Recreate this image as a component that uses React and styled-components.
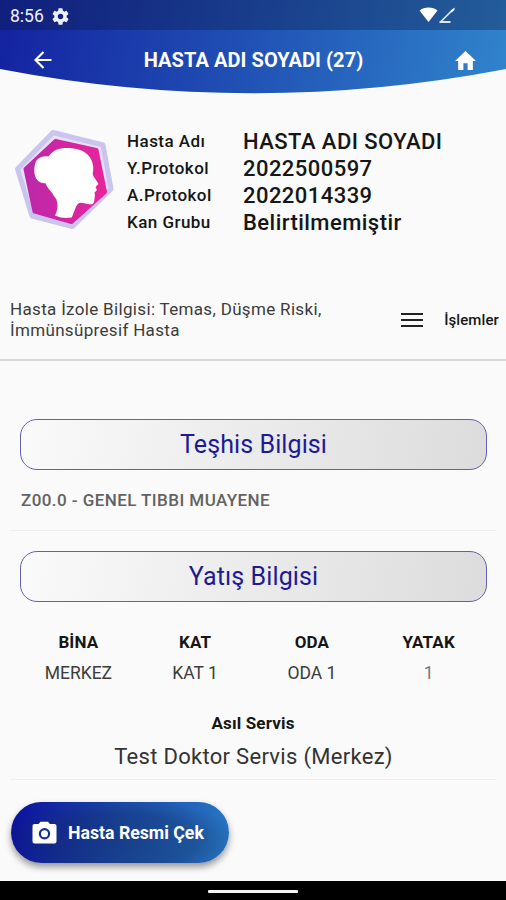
import React from 'react'
import styled, { createGlobalStyle } from 'styled-components'

const patient = [
    { label: 'Hasta Adı', value: 'HASTA ADI SOYADI' },
    { label: 'Y.Protokol', value: '2022500597' },
    { label: 'A.Protokol', value: '2022014339' },
    { label: 'Kan Grubu', value: 'Belirtilmemiştir' },
]

const location = [
    { label: 'BİNA', value: 'MERKEZ' },
    { label: 'KAT', value: 'KAT 1' },
    { label: 'ODA', value: 'ODA 1' },
    { label: 'YATAK', value: '1', light: true },
]

function GearIcon() {
    return (
        <svg width="17" height="17" viewBox="2 2 20 20" fill="currentColor">
            <path d="M19.14 12.94c.04-.3.06-.61.06-.94 0-.32-.02-.64-.07-.94l2.03-1.58a.49.49 0 0 0 .12-.61l-1.92-3.32a.488.488 0 0 0-.59-.22l-2.39.96c-.5-.38-1.03-.7-1.62-.94l-.36-2.54a.484.484 0 0 0-.48-.41h-3.84c-.24 0-.43.17-.47.41l-.36 2.54c-.59.24-1.13.57-1.62.94l-2.39-.96c-.22-.08-.47 0-.59.22L2.74 8.87c-.12.21-.08.47.12.61l2.03 1.58c-.05.3-.09.63-.09.94s.02.64.07.94l-2.03 1.58a.49.49 0 0 0-.12.61l1.92 3.32c.12.22.37.29.59.22l2.39-.96c.5.38 1.03.7 1.62.94l.36 2.54c.05.24.24.41.48.41h3.84c.24 0 .44-.17.47-.41l.36-2.54c.59-.24 1.13-.56 1.62-.94l2.39.96c.22.08.47 0 .59-.22l1.92-3.32c.12-.22.07-.47-.12-.61l-2.01-1.58zM12 15.2A3.200 3.200 0 1 1 12 8.800a3.200 3.200 0 0 1 0 6.400z"/>
        </svg>
    )
}

function SignalIcons() {
    return (
        <svg width="37" height="18" viewBox="0 0 37 18" fill="none">
            <path d="M.5 4.500C5 .4 14 .4 18.500 4.500L9.500 16Z" fill="#fff"/>
            <path d="M22 15.500L34 3.500" stroke="#dce7f3" strokeWidth="1.700"/>
            <path d="M31.500 5L35.500 1.500V4L32.500 6.500Z" fill="#fff"/>
            <path d="M20.500 16H31.500" stroke="#dce7f3" strokeWidth="2"/>
        </svg>
    )
}

function BackIcon() {
    return (
        <svg width="18" height="18" viewBox="0 0 18 18" fill="none" stroke="#fff" strokeWidth="2.200">
            <path d="M17.500 9H2M9.500 1L1.500 9L9.500 17"/>
        </svg>
    )
}

function HomeIcon() {
    return (
        <svg width="21" height="19" viewBox="0 0 20 17" fill="#fff" preserveAspectRatio="none">
            <path d="M8 17v-6h4v6h5V9h3L10 0 0 9h3v8z"/>
        </svg>
    )
}

function CameraIcon() {
    return (
        <svg width="25" height="23" viewBox="0 0 25 23">
            <path d="M2.500 3H6.500L8.500.7H16L18 3H22.500A2 2 0 0 1 24.500 5V20.500A2 2 0 0 1 22.500 22.500H2.500A2 2 0 0 1 .5 20.500V5A2 2 0 0 1 2.500 3Z" fill="#fff"/>
            <circle cx="12.500" cy="12.700" r="4.600" fill="none" stroke="#16308f" strokeWidth="2.200"/>
        </svg>
    )
}

function Avatar() {
    return (
        <svg width="102" height="102" viewBox="13 129 102 102">
            <defs>
                <linearGradient id="pink" x1="0" y1="0" x2="1" y2="0">
                    <stop offset="0" stopColor="#bb28aa"/>
                    <stop offset="1" stopColor="#e8249a"/>
                </linearGradient>
            </defs>
            <path d="M53 132.500L103 145L111 189L72.500 226.500L32 216L17.500 169Z" fill="#e7e1f8" stroke="#cac4ee" strokeWidth="5" strokeLinejoin="round"/>
            <path d="M55.500 141L96.500 150L105 192L71.500 222L34.500 211.500L25.500 169Z" fill="url(#pink)" stroke="url(#pink)" strokeWidth="4" strokeLinejoin="round"/>
            <path d="M48.500 156.500C53 150 59 148 67 148C76 148 84 150.500 88 155C92 159 94.500 166 92.700 173.500C93 177 96.500 180 98.500 184L95.500 187L97 190L94.500 192.500L95 195.500C94 198 95.500 203.500 91.500 204.300C88 205 80.500 201.500 78.300 203.500C75.500 206 74 213 71.700 217.500C66 218.500 60 218 55 215.500C57.500 211 58 206 57 201.500C56.500 198 54 197 52.500 193.500C50 190 46.500 187 45.700 183.300C42 183.500 37 181.500 35.500 177C33.500 172 34 165 36.500 160.500C39.500 156.500 44 156 48.500 156.500Z" fill="#fff"/>
        </svg>
    )
}

export default function App() {
    return (
        <Screen>
            <GlobalStyle/>
            <Header>
                <StatusBar>
                    <Clock>8:56</Clock>
                    <GearIcon/>
                    <Signal><SignalIcons/></Signal>
                </StatusBar>
                <TitleBar>
                    <BackIcon/>
                    <Title>HASTA ADI SOYADI (27)</Title>
                    <HomeIcon/>
                </TitleBar>
            </Header>
            <Patient>
                <Avatar/>
                <PatientGrid>
                    {patient.map(({ label, value }) => (
                        <React.Fragment key={label}>
                            <PatientLabel>{label}</PatientLabel>
                            <PatientValue>{value}</PatientValue>
                        </React.Fragment>
                    ))}
                </PatientGrid>
            </Patient>
            <InfoRow>
                <Isolation>Hasta İzole Bilgisi: Temas, Düşme Riski,<br/>İmmünsüpresif Hasta</Isolation>
                <MenuButton>
                    <Burger><i/><i/><i/></Burger>
                    İşlemler
                </MenuButton>
            </InfoRow>
            <Content>
                <Section>Teşhis Bilgisi</Section>
                <Diagnosis>Z00.0 - GENEL TIBBI MUAYENE</Diagnosis>
                <Section>Yatış Bilgisi</Section>
                <LocationGrid>
                    {location.map(({ label, value, light }) => (
                        <Cell key={label}>
                            <CellLabel>{label}</CellLabel>
                            <CellValue $light={light}>{value}</CellValue>
                        </Cell>
                    ))}
                </LocationGrid>
                <Service>
                    <ServiceLabel>Asıl Servis</ServiceLabel>
                    <ServiceName>Test Doktor Servis (Merkez)</ServiceName>
                </Service>
            </Content>
            <PhotoButton>
                <CameraIcon/>
                <span>Hasta Resmi Çek</span>
            </PhotoButton>
            <NavBar><Handle/></NavBar>
        </Screen>
    )
}

const GlobalStyle = createGlobalStyle`
    * {
        box-sizing: border-box;
    }

    body {
        margin: 0;
        background-color: #fafafa;
        font-family: Roboto, sans-serif;
    }

    svg {
        display: block;
        flex-shrink: 0;
    }
`

const Screen = styled.div`
    display: flex;
    flex-direction: column;
    width: 506px;
    height: 900px;
    overflow: hidden;
    background-color: #fafafa;
    color: #161616;
    white-space: nowrap;
`

const Header = styled.header`
    flex-shrink: 0;
    height: 94px;
    background: linear-gradient(100deg, #1422a0 0%, #2050b4 48%, #3084cc 100%);
    clip-path: path('M0 0H506V69Q253 117.500 0 69Z');
`

const StatusBar = styled.div`
    display: flex;
    align-items: center;
    height: 30px;
    padding: 2px 50px 0 10px;
    background-color: rgb(12, 24, 60, 0.34);
    color: #eef1f9;
`

const Clock = styled.span`
    width: 42px;
    font-size: 17.5px;
`

const Signal = styled.div`
    margin: 0 0 2px auto;
`

const TitleBar = styled.div`
    display: flex;
    align-items: center;
    justify-content: space-between;
    height: 60px;
    padding: 0 30px 0 34px;
`

const Title = styled.h1`
    margin: 0 0 1px;
    color: #fff;
    font-size: 20px;
    font-weight: 700;
    letter-spacing: 0.07px;
`

const Patient = styled.section`
    display: flex;
    align-items: flex-start;
    gap: 12px;
    height: 205px;
    padding: 35px 0 0 13px;
`

const PatientGrid = styled.div`
    display: grid;
    grid-template-columns: 116px auto;
    grid-auto-rows: 27.2px;
    align-items: center;
    margin-top: -2px;
`

const PatientLabel = styled.span`
    font-size: 17px;
    font-weight: 500;
    letter-spacing: 0.45px;
`

const PatientValue = styled.span`
    padding-top: 1px;
    font-size: 22px;
    font-weight: 500;
    letter-spacing: 0.45px;
`

const InfoRow = styled.section`
    display: flex;
    justify-content: space-between;
    height: 62px;
    padding: 0 7px 0 10px;
    border-bottom: 2px solid #d6d6d6;
`

const Isolation = styled.p`
    margin: 0;
    color: #3c3c3c;
    font-size: 17px;
    line-height: 21px;
    letter-spacing: 0.33px;
`

const MenuButton = styled.div`
    display: flex;
    align-items: center;
    gap: 21px;
    height: 42px;
    font-size: 15px;
    font-weight: 500;
    letter-spacing: 0.1px;
`

const Burger = styled.div`
    display: flex;
    flex-direction: column;
    gap: 4px;
    width: 22px;

    i {
        height: 2px;
        background-color: #222;
    }
`

const Content = styled.main`
    display: flex;
    flex-direction: column;
    padding: 58px 10px 0;
`

const Section = styled.h2`
    display: flex;
    align-items: center;
    justify-content: center;
    height: 51px;
    margin: 0 9px 0 10px;
    border: 1px solid #6260b4;
    border-radius: 17px;
    background: linear-gradient(100deg, #fafafa, #dcdcdc);
    color: #1d1b94;
    font-size: 25px;
    font-weight: 400;
    letter-spacing: 0.1px;
`

const Diagnosis = styled.p`
    height: 61px;
    margin: 0 0 20px;
    padding: 20px 10px 0 11px;
    border-bottom: 1px solid #eee;
    color: #626262;
    font-size: 17px;
    font-weight: 500;
    line-height: 21px;
    letter-spacing: 0.43px;
`

const LocationGrid = styled.div`
    display: grid;
    grid-template-columns: repeat(4, 1fr);
    margin: 30px 9px 0 10px;
`

const Cell = styled.div`
    display: flex;
    flex-direction: column;
    gap: 10px;
    text-align: center;
    line-height: 21px;
`

const CellLabel = styled.span`
    font-size: 17px;
    font-weight: 700;
    letter-spacing: 0.15px;
`

const CellValue = styled.span`
    color: ${props => props.$light ? '#777' : '#3c3c3c'};
    font-size: 17.5px;
`

const Service = styled.div`
    display: flex;
    flex-direction: column;
    align-items: center;
    height: 96px;
    padding-top: 29px;
    border-bottom: 1px solid #eee;
`

const ServiceLabel = styled.span`
    font-size: 17px;
    font-weight: 700;
    line-height: 20px;
    letter-spacing: 0.15px;
`

const ServiceName = styled.span`
    margin-top: 10px;
    padding-left: 1px;
    color: #333;
    font-size: 22px;
    line-height: 28px;
    letter-spacing: 0.3px;
`

const PhotoButton = styled.button`
    display: flex;
    align-items: center;
    gap: 11px;
    flex-shrink: 0;
    width: 218px;
    height: 61px;
    margin: auto 0 18px 11px;
    padding: 0 0 0 21px;
    border: none;
    border-radius: 31px;
    background:
        radial-gradient(ellipse at 50% 65%, rgb(16, 40, 80, 0.4) 0%, rgb(16, 40, 80, 0.32) 50%, transparent 78%),
        linear-gradient(100deg, #0c109c 0%, #1c4cb0 50%, #2878c4 100%);
    box-shadow: 0 4px 7px rgb(0, 0, 0, 0.4);
    color: #fff;
    font-family: inherit;
    font-size: 17.7px;
    font-weight: 700;
`

const NavBar = styled.footer`
    display: flex;
    align-items: center;
    justify-content: center;
    flex-shrink: 0;
    height: 19px;
    background-color: #000;
`

const Handle = styled.div`
    width: 90px;
    height: 3px;
    margin-top: 2px;
    border-radius: 1px;
    background-color: #f4f4f4;
`
